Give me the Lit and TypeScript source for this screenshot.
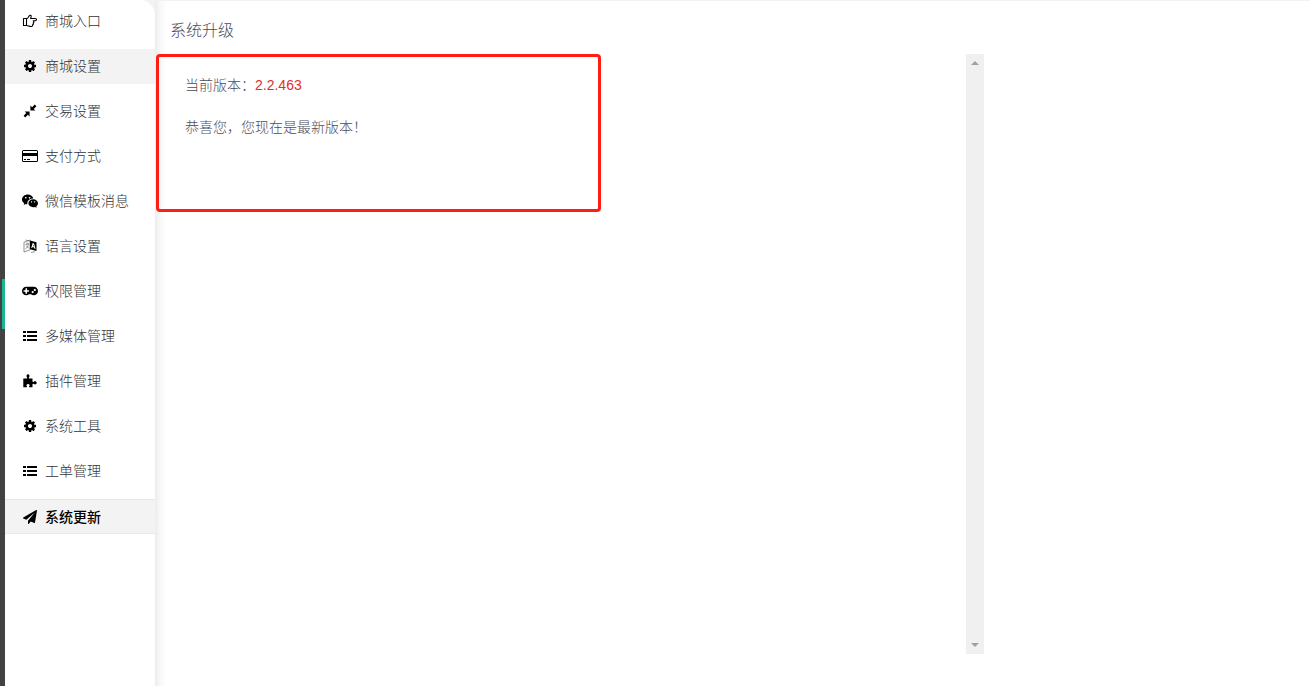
import { LitElement, html, css, svg } from "lit";
import { customElement, state } from "lit/decorators.js";

const cog = svg`<svg viewBox="0 0 1792 1792" aria-hidden="true"><path d="M1152 896q0-106-75-181t-181-75-181 75-75 181 75 181 181 75 181-75 75-181zm512-109v222q0 12-8 23t-20 13l-185 28q-19 54-39 91 35 50 107 138 10 12 10 25t-9 23q-27 37-99 108t-94 71q-12 0-26-9l-138-108q-44 23-91 38-16 136-29 186-7 28-36 28h-222q-14 0-24.500-8.500t-11.500-21.500l-28-184q-49-16-90-37l-141 107q-10 9-25 9-14 0-25-11-126-114-165-168-7-10-7-23 0-12 8-23 15-21 51-66.500t54-70.500q-27-50-41-99l-183-27q-13-2-21-12.500t-8-23.500v-222q0-12 8-23t19-13l186-28q14-46 39-92-40-57-107-138-10-12-10-24 0-10 9-23 26-36 98.500-107.500t94.500-71.500q13 0 26 10l138 107q44-23 91-38 16-136 29-186 7-28 36-28h222q14 0 24.500 8.500t11.500 21.500l28 184q49 16 90 37l142-107q9-9 24-9 13 0 25 10 129 119 165 170 7 8 7 22 0 12-8 23-15 21-51 66.500t-54 70.500q26 50 41 98l183 28q13 2 21 12.500t8 23.500z"/></svg>`;

const list = svg`<svg viewBox="0 0 16 16" aria-hidden="true"><path d="M1 3h3v2H1zM5 3h10v2H5zM1 7h3v2H1zM5 7h10v2H5zM1 11h3v2H1zM5 11h10v2H5z"/></svg>`;

const icons = {
  hand: svg`<svg viewBox="0 0 16 16" aria-hidden="true"><path fill="none" stroke="#000" stroke-width="1.1" stroke-linejoin="round" d="M4.500 5.500H1.500v7h3zM4.500 5.700C6 5.400 6.500 3.800 7.200 2.900 8 1.800 9.500 2.300 9.200 3.700L8.600 5.500H13.300c1.600 0 1.600 2.200 0 2.200H11.200c1 .6.800 1.800 0 2.200.5.800.2 1.600-.6 1.900.2 1.100-.5 1.700-1.700 1.700-1.900 0-2.700-1-4.400-1z"/></svg>`,
  cog,
  compress: svg`<svg viewBox="0 0 16 16" aria-hidden="true"><path d="M7.600 8.400v5L5.900 11.700 3.200 14.400 1.600 12.800 4.300 10.100 2.600 8.400zM8.400 7.600v-5l1.700 1.700L12.800 1.600 14.400 3.200l-2.700 2.700 1.700 1.700z"/></svg>`,
  card: svg`<svg viewBox="0 0 16 16" aria-hidden="true"><path fill-rule="evenodd" d="M1.500 2h13Q16 2 16 3.500v9q0 1.500-1.500 1.500h-13Q0 14 0 12.500v-9Q0 2 1.500 2zM1 3v2h14V3zM1 8v5h14V8zM2 11h2v1H2zM5 11h3v1H5z"/></svg>`,
  wechat: svg`<svg viewBox="0 0 16 16" aria-hidden="true"><path fill-rule="evenodd" d="M5.700 1.500C8.600 1.500 11 3.300 11.300 5.600 8 5.500 5.300 7.700 5.300 10.300c0 .3 0 .6.100.9-.6 0-1.200-.1-1.700-.3L1.700 12l.5-1.800C.9 9.300 0 8 0 6.400 0 3.700 2.500 1.500 5.700 1.500zM3.800 3.900a.8.8 0 1 0 .01 0zM7.600 3.900a.8.8 0 1 0 .01 0z"/><path fill-rule="evenodd" d="M11.200 6.200c2.700 0 4.800 1.800 4.800 4.100 0 1.200-.7 2.300-1.700 3l.4 1.400-1.600-.8c-.6.200-1.200.3-1.900.3-2.700 0-4.800-1.700-4.800-3.900s2.100-4.100 4.800-4.100zM9.600 8.300a.6.600 0 1 0 .01 0zM12.700 8.300a.6.600 0 1 0 .01 0z"/></svg>`,
  language: svg`<svg viewBox="0 0 16 16" aria-hidden="true"><path fill="none" stroke="#666" stroke-width=".7" d="M2 4.200 8 2v9.800L2 14zM3.500 6.500l3.500-1M5 4.500v2M6.500 6c-.5 2.500-1.500 4-3.200 5M4 7.500l3 3M3.500 2l4 1M9 14.500l4-.8"/><path fill-rule="evenodd" d="M8 2.500 14.500 4.300V13L8 11.300zM10.700 5 9.200 9.800l1 .3.300-1.100 1.700.5.400 1.300 1 .3L12 5.400zm.7 1.700.5 1.700-1-.3z"/></svg>`,
  gamepad: svg`<svg viewBox="0 64 1920 1920" aria-hidden="true"><path d="M832 1088v-128q0-14-9-23t-23-9h-192v-192q0-14-9-23t-23-9h-128q-14 0-23 9t-9 23v192h-192q-14 0-23 9t-9 23v128q0 14 9 23t23 9h192v192q0 14 9 23t23 9h128q14 0 23-9t9-23v-192h192q14 0 23-9t9-23zm576 64q0-53-37.500-90.500t-90.500-37.500-90.500 37.500-37.500 90.500 37.500 90.500 90.500 37.500 90.500-37.500 37.500-90.500zm256-256q0-53-37.500-90.500t-90.500-37.500-90.500 37.500-37.500 90.500 37.500 90.500 90.500 37.500 90.500-37.500 37.500-90.500zm256 128q0 212-150 362t-362 150q-192 0-338-128h-220q-146 128-338 128-212 0-362-150t-150-362 150-362 362-150h896q212 0 362 150t150 362z"/></svg>`,
  list,
  puzzle: svg`<svg viewBox="0 0 16 16" aria-hidden="true"><path d="M1.300 5.500h3.400c.8 0 .6-.6.200-1.200C4 2.900 4.600 1.300 6 1.300s2 1.600 1.100 3c-.4.600-.6 1.200.2 1.200h3.200v2.700c0 .9.500 1 1.200.5 1.400-1 3-.4 3 1.100s-1.600 2.100-3 1.200c-.7-.5-1.200-.3-1.200.6v2.700H7.800c-.9 0-.9-.6-.4-1.300.6-.9.200-2-1.300-2s-2 1.100-1.400 2c.5.700.4 1.300-.5 1.300H1.300z"/></svg>`,
  plane: svg`<svg viewBox="0 0 1792 1792" aria-hidden="true"><path d="M1764 11q33 24 27 64l-256 1536q-5 29-32 45-14 8-31 8-11 0-24-5l-453-185-242 295q-18 23-49 23-13 0-22-4-19-7-30.500-23.500t-11.500-36.500v-349l864-1059-1069 925-395-162q-37-14-40-55-2-40 32-59l1664-960q15-9 32-9 20 0 36 11z"/></svg>`,
};

type IconName = keyof typeof icons;

interface MenuItem {
  icon: IconName;
  label: string;
}

const menu: MenuItem[] = [
  { icon: "hand", label: "商城入口" },
  { icon: "cog", label: "商城设置" },
  { icon: "compress", label: "交易设置" },
  { icon: "card", label: "支付方式" },
  { icon: "wechat", label: "微信模板消息" },
  { icon: "language", label: "语言设置" },
  { icon: "gamepad", label: "权限管理" },
  { icon: "list", label: "多媒体管理" },
  { icon: "puzzle", label: "插件管理" },
  { icon: "cog", label: "系统工具" },
  { icon: "list", label: "工单管理" },
  { icon: "plane", label: "系统更新" },
];

@customElement("app-root")
export class AppRoot extends LitElement {
  @state() private active = "系统更新";

  static styles = css`
    :host {
      display: flex;
      min-height: 100vh;
      box-sizing: border-box;
      background: #f3f3f4;
      font: 300 14px/20px "Liberation Sans", "Noto Sans CJK SC", sans-serif;
      color: #4c4c5c;
    }
    .rail {
      flex: none;
      box-sizing: border-box;
      width: 5px;
      padding: 279px 0 0 2px;
      background: #424242;
    }
    .marker {
      height: 50px;
      background: #1ab394;
    }
    .side {
      flex: none;
      box-sizing: border-box;
      width: 150px;
      padding-top: 4px;
      border-radius: 0 15px 0 0;
      background: #fff;
    }
    .menu {
      display: flex;
      flex-direction: column;
      gap: 10px;
      margin: 0;
      padding: 0;
      list-style: none;
    }
    .link {
      display: flex;
      align-items: center;
      gap: 8px;
      box-sizing: border-box;
      height: 35px;
      padding: 0 0 2px 17px;
      color: #333;
      text-decoration: none;
    }
    .link.shaded,
    .link.active {
      background: #f3f3f3;
    }
    .link.active {
      padding-bottom: 0;
      border: solid #e7e7ef;
      border-width: 1px 0;
      color: #000;
      font-weight: 500;
    }
    .icon {
      display: flex;
      justify-content: center;
      width: 15px;
      color: #000;
    }
    .icon svg {
      flex: none;
      width: 16px;
      height: 16px;
      fill: currentColor;
    }
    .icon.cog svg,
    .icon.plane svg {
      width: 14px;
      height: 14px;
    }
    .main {
      flex: 1;
      min-width: 0;
      margin-top: 1px;
      padding: 20px 10px 31px 15px;
      background: linear-gradient(to right, #ececec, #f8f8f8 5px, #fff 12px);
    }
    .title {
      margin: 0 0 13px;
      font-size: 16px;
      line-height: 20px;
      font-weight: 300;
    }
    .panel {
      position: relative;
      display: flex;
      width: 72%;
      height: 600px;
    }
    .body {
      flex: 1;
      padding: 21px 15px;
    }
    .body p {
      margin: 0 0 22px;
    }
    .version {
      color: #e02e2a;
      font-weight: 400;
    }
    .bar {
      display: flex;
      flex-direction: column;
      justify-content: space-between;
      align-items: center;
      box-sizing: border-box;
      width: 18px;
      padding: 7px 0;
      background: #f0f0f0;
    }
    .bar svg {
      width: 8px;
      height: 4px;
      fill: #a0a0a0;
    }
    .frame {
      position: absolute;
      top: 0;
      left: -14px;
      box-sizing: border-box;
      width: 445px;
      height: 158px;
      border: 3px solid #ff1e12;
      border-radius: 4px;
      pointer-events: none;
    }
  `;

  private pick(e: Event, label: string) {
    e.preventDefault();
    this.active = label;
  }

  render() {
    return html`
      <div class="rail"><div class="marker"></div></div>
      <nav class="side">
        <ul class="menu">
          ${menu.map(
            (m, i) => html`<li>
              <a
                class="link ${i === 1 ? "shaded" : ""} ${m.label === this.active ? "active" : ""}"
                href="#"
                @click=${(e: Event) => this.pick(e, m.label)}
                ><span class="icon ${m.icon}">${icons[m.icon]}</span><span>${m.label}</span></a
              >
            </li>`
          )}
        </ul>
      </nav>
      <main class="main">
        <h1 class="title">系统升级</h1>
        <section class="panel">
          <div class="body">
            <p>当前版本：<span class="version">2.2.463</span></p>
            <p>恭喜您，您现在是最新版本！</p>
          </div>
          <div class="bar">
            <svg viewBox="0 0 8 4" aria-hidden="true"><path d="M0 4 4 0l4 4z" /></svg>
            <svg viewBox="0 0 8 4" aria-hidden="true"><path d="M0 0h8L4 4z" /></svg>
          </div>
          <div class="frame"></div>
        </section>
      </main>
    `;
  }
}
